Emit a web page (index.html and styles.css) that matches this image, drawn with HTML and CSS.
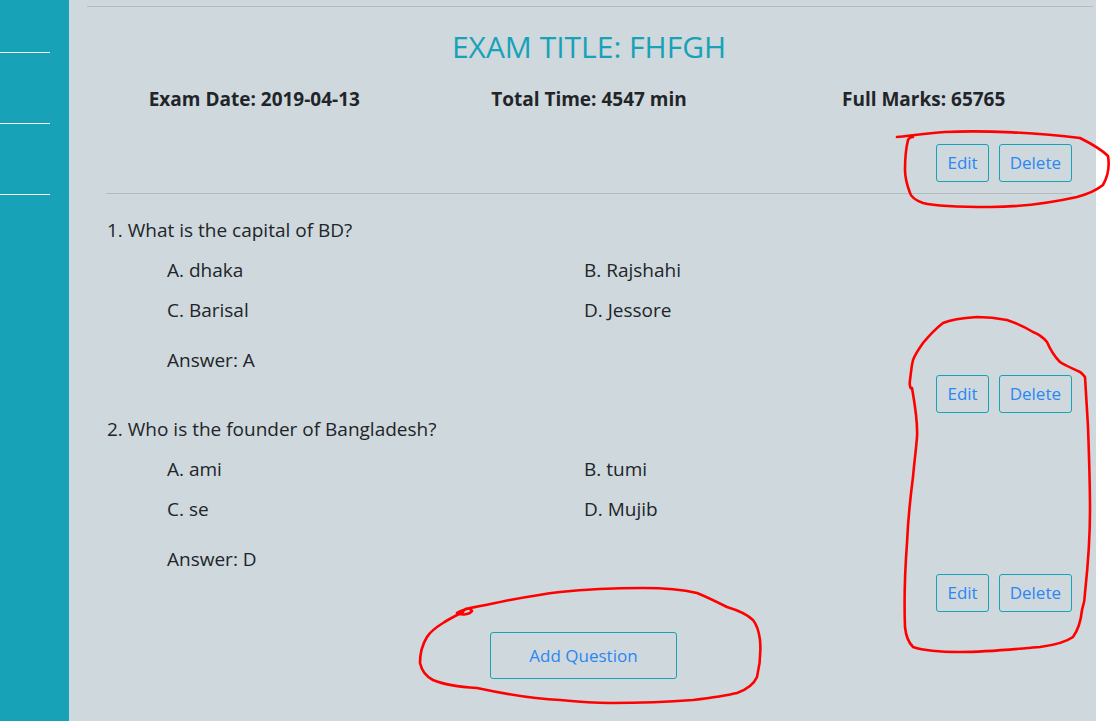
FILE: index.html
```html
<!DOCTYPE html>
<html>
<head>
<meta charset="utf-8">
<link rel="stylesheet" href="styles.css">
</head>
<body>
<div class="page">
  <aside class="sidebar">
    <div class="side-line"></div>
    <div class="side-line"></div>
    <div class="side-line"></div>
  </aside>
  <main class="main">
    <div class="container">
      <hr class="top-rule">
      <h1 class="title">EXAM TITLE: FHFGH</h1>
      <div class="info">
        <div class="info-item">Exam Date: 2019-04-13</div>
        <div class="info-item">Total Time: 4547 min</div>
        <div class="info-item">Full Marks: 65765</div>
      </div>
      <div class="inner">
        <div class="actions actions-top">
          <button class="btn">Edit</button>
          <button class="btn">Delete</button>
        </div>
        <hr class="mid-rule">

        <div class="question">
          <div class="q-text">1. What is the capital of BD?</div>
          <div class="options">
            <div class="opt">A. dhaka</div>
            <div class="opt">B. Rajshahi</div>
            <div class="opt">C. Barisal</div>
            <div class="opt">D. Jessore</div>
          </div>
          <div class="answer">Answer: A</div>
          <div class="actions actions-q">
            <button class="btn">Edit</button>
            <button class="btn">Delete</button>
          </div>
        </div>

        <div class="question">
          <div class="q-text">2. Who is the founder of Bangladesh?</div>
          <div class="options">
            <div class="opt">A. ami</div>
            <div class="opt">B. tumi</div>
            <div class="opt">C. se</div>
            <div class="opt">D. Mujib</div>
          </div>
          <div class="answer">Answer: D</div>
          <div class="actions actions-q">
            <button class="btn">Edit</button>
            <button class="btn">Delete</button>
          </div>
        </div>

        <div class="add-row">
          <button class="btn btn-add">Add Question</button>
        </div>
      </div>
    </div>
  </main>
  <div class="edge"></div>
</div>

<svg class="marks" width="1110" height="721" viewBox="0 0 1110 721">
  <path d="M897 137 C 915 135, 930 133, 945 132 C 985 130, 1040 133, 1080 138 C 1092 144, 1102 150, 1108 156 C 1110 168, 1107 178, 1103 185 C 1098 189, 1088 194, 1077 197 C 1050 203, 1020 207, 990 207 C 960 207, 935 206, 923 203 C 915 200, 911 197, 910 193 C 907 185, 905 177, 905 170 C 905 158, 906 148, 908 140 C 909 138, 911 137, 913 137"/>
  <path d="M977 317 C 962 318, 950 320, 943 323 C 934 330, 928 337, 923 343 C 918 350, 915 355, 913 360 C 911 368, 911 374, 910 380 C 909 386, 911 390, 912 388 C 914 400, 918 420, 917 437 C 916 450, 914 465, 913 477 C 910 500, 908 520, 907 543 C 905 570, 904 600, 905 627 C 906 637, 909 643, 913 647 C 925 651, 940 652, 960 652 C 990 652, 1015 649, 1040 647 C 1055 645, 1066 642, 1073 637 C 1078 630, 1081 620, 1082 610 C 1084 604, 1085 598, 1085 593 C 1088 565, 1090 540, 1090 510 C 1090 480, 1089 455, 1088 427 C 1087 410, 1086 392, 1085 377 C 1083 375, 1082 373, 1080 372 C 1072 368, 1066 366, 1060 362 C 1054 356, 1050 349, 1047 342 C 1043 337, 1038 334, 1033 332 C 1025 327, 1016 323, 1007 320 C 997 318, 987 317, 977 317 Z"/>
  <path d="M470 608 C 463 610, 458 612, 457 613 C 462 616, 470 614, 472 611 C 470 607, 464 608, 463 612 C 455 616, 449 619, 443 623 C 435 628, 430 632, 427 637 C 422 645, 420 655, 420 663 C 422 672, 427 677, 433 680 C 445 685, 460 687, 477 688 C 505 694, 535 699, 560 700 C 580 702, 595 703, 610 703 C 640 703, 668 702, 693 700 C 710 698, 725 696, 737 693 C 748 689, 754 684, 757 677 C 760 665, 761 652, 760 640 C 759 632, 757 625, 753 620 C 746 613, 737 610, 727 607 C 717 602, 707 597, 697 593 C 680 589, 662 588, 643 588 C 615 588, 588 589, 560 592 C 543 594, 526 597, 510 600 C 495 603, 482 606, 470 608"/>
</svg>
</body>
</html>
```

FILE: styles.css
```css
* { box-sizing: border-box; }

html, body {
  margin: 0;
  padding: 0;
  background: #ffffff;
}

body {
  font-family: "Open Sans", "Noto Sans", sans-serif;
  color: #212529;
  width: 1110px;
  height: 721px;
  overflow: hidden;
  position: relative;
}

.page {
  display: flex;
  height: 721px;
}

.sidebar {
  width: 69px;
  flex: none;
  background: #17a2b8;
  padding-top: 52px;
  display: flex;
  flex-direction: column;
  gap: 70px;
}

.side-line {
  width: 50px;
  height: 1px;
  background: #ffffff;
}

.main {
  width: 1027px;
  flex: none;
  background: #cfd8dc;
  padding-left: 18px;
}

.edge {
  flex: 1;
  background: #ffffff;
}

.container {
  width: 1006px;
}

.top-rule {
  margin: 6px 0 0 0;
  border: 0;
  border-top: 1px solid #b4bcc0;
  height: 0;
}

.title {
  margin: 23px 0 0 0;
  text-align: center;
  font-size: 30px;
  line-height: 34px;
  font-weight: 400;
  color: #17a2b8;
  padding-right: 2px;
}

.info {
  display: grid;
  grid-template-columns: repeat(3, 1fr);
  margin-top: 22px;
  padding-right: 2px;
}

.info-item {
  text-align: center;
  font-size: 19px;
  font-weight: 700;
  line-height: 26px;
}

.inner {
  padding: 0 21px 0 19px;
}

.actions {
  display: flex;
  justify-content: flex-end;
  gap: 10px;
}

.actions-top {
  margin-top: 32px;
}

.actions-q {
  margin-top: 3px;
}

.btn {
  font-family: "Open Sans", "Noto Sans", sans-serif;
  background: transparent;
  border: 1px solid #17a2b8;
  border-radius: 3px;
  color: #2a87f5;
  font-size: 17px;
  height: 38px;
  padding: 0 10px;
  line-height: 36px;
  margin: 0;
}

.mid-rule {
  margin: 11px 0 0 0;
  border: 0;
  border-top: 1px solid #b4bcc0;
  height: 0;
}

.question {
  padding-top: 24px;
}

.question + .question {
  padding-top: 4px;
}

.q-text {
  font-size: 19px;
  line-height: 24px;
  padding-left: 1px;
}

.options {
  display: grid;
  grid-template-columns: 417px 417px;
  margin: 8px 0 0 61px;
}

.opt {
  font-size: 19px;
  line-height: 40px;
}

.answer {
  font-size: 19px;
  line-height: 24px;
  margin: 18px 0 0 61px;
}

.add-row {
  display: flex;
  justify-content: center;
  margin-top: 20px;
  padding-right: 11px;
}

.btn-add {
  width: 187px;
  height: 47px;
  line-height: 45px;
}

.marks {
  position: absolute;
  left: 0;
  top: 0;
  pointer-events: none;
}

.marks path {
  fill: none;
  stroke: #ff0000;
  stroke-width: 2.6;
  stroke-linecap: round;
  stroke-linejoin: round;
}
```
